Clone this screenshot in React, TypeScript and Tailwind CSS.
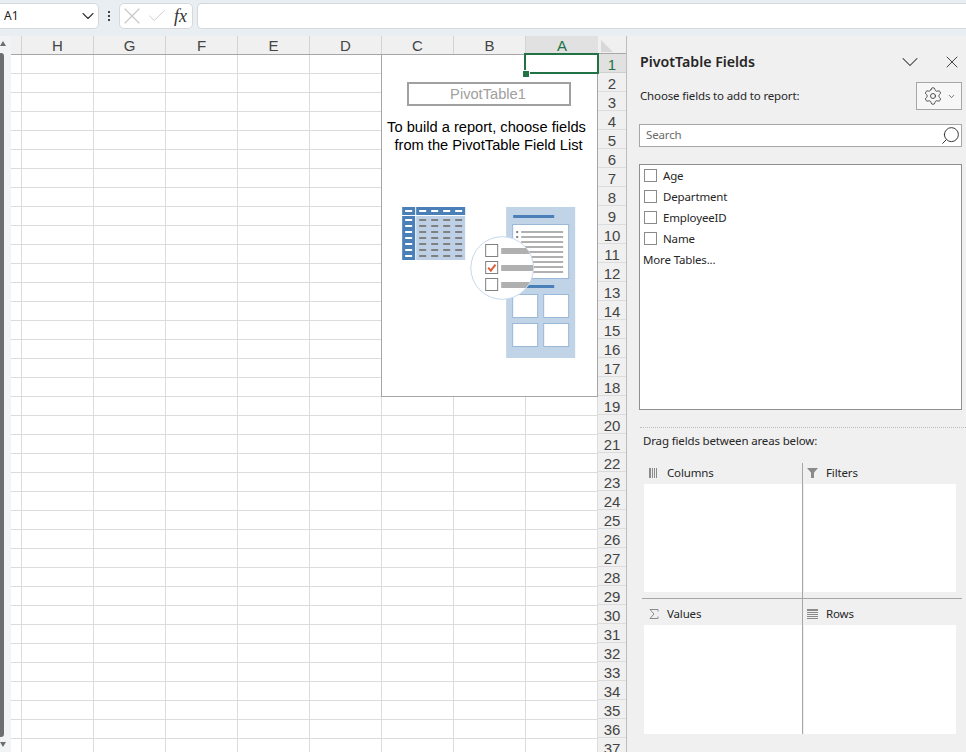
import { Check, ChevronDown, Search, Settings, X } from "lucide-react";

const columns = ["H", "G", "F", "E", "D", "C", "B", "A"];
const rowNumbers = Array.from({ length: 37 }, (_, i) => i + 1);
const fields = ["Age", "Department", "EmployeeID", "Name"];

function FormulaBar() {
  return (
    <div className="flex h-[36px] items-start bg-[#e9eef2] pt-[3px] font-['Noto_Sans',sans-serif]">
      <div className="ml-[-6px] flex h-[26px] w-[105px] items-center justify-between rounded-[5px] border border-[#d6d8da] bg-white pl-[9px] text-[12px] text-[#222]">
        <span>A1</span>
        <ChevronDown size={20} strokeWidth={1.3} className="text-[#333]" />
      </div>
      <div className="ml-[7px] flex h-[26px] w-[6px] flex-col items-center justify-center gap-[2px]">
        <span className="h-[2px] w-[2px] bg-[#444]" />
        <span className="h-[2px] w-[2px] bg-[#444]" />
        <span className="h-[2px] w-[2px] bg-[#444]" />
      </div>
      <div className="ml-[7px] flex h-[26px] w-[74px] items-center rounded-[5px] border border-[#d6d8da] bg-white text-[#c8c8c8]">
        <X size={28} strokeWidth={1} className="ml-[-2px] shrink-0" />
        <Check size={22} strokeWidth={1} className="shrink-0" />
        <span className="ml-[6px] font-['Liberation_Serif',serif] text-[18px] text-[#333] italic">fx</span>
      </div>
      <div className="ml-[4px] h-[26px] flex-1 rounded-l-[5px] border border-r-0 border-[#d6d8da] bg-white" />
    </div>
  );
}

function ScrollStrip() {
  return (
    <div className="flex h-[716px] w-[11px] flex-col bg-[#f1f3f5]">
      <div className="mt-[5px] h-[5px] w-0 border-x-[3px] border-b-[5px] border-x-transparent border-b-[#6e6e6e]" />
      <div className="mt-[7px] h-[684px] w-[4px] rounded-r-[3px] bg-[#6e6e6e]" />
      <div className="mt-[5px] h-0 w-0 border-x-[3px] border-t-[5px] border-x-transparent border-t-[#6e6e6e]" />
    </div>
  );
}

function Sheet() {
  return (
    <div className="relative w-[587px] font-['Liberation_Sans',sans-serif]">
      <div className="flex h-[19px] border-b border-[#a6a6a6] bg-[#f0f0f0] text-[15px] leading-[19px] text-[#444]">
        <div className="w-[11px] border-r border-[#d4d4d4]" />
        {columns.map((col) => (
          <div
            key={col}
            className={
              col === "A"
                ? "w-[72px] bg-[#e1e1e1] text-center text-[#217346]"
                : "w-[72px] border-r border-[#d4d4d4] text-center"
            }
          >
            {col}
          </div>
        ))}
      </div>
      <div className="h-[697px] overflow-hidden bg-white">
        {rowNumbers.map((n) => (
          <div key={n} className="flex h-[19px] border-b border-[#dcdcdc]">
            <div className="w-[11px] border-r border-[#dcdcdc]" />
            {columns.map((col) => (
              <div key={col} className="w-[72px] border-r border-[#dcdcdc]" />
            ))}
          </div>
        ))}
      </div>

      {/* PivotTable placeholder sits over the cells */}
      <div className="absolute top-[18px] left-[370px] flex h-[343px] w-[217px] flex-col items-center border border-[#a6a6a6] bg-white text-[14.67px] text-black">
        <div className="mt-[27px] mr-[1px] flex h-[24px] w-[164px] items-center justify-center border-2 border-[#a0a0a0] pr-[2px] text-[#a0a0a0]">
          PivotTable1
        </div>
        <p className="mt-[12px] mr-[6px] text-center leading-[18px] whitespace-pre">
          {"To build a report, choose fields\n from the PivotTable Field List"}
        </p>
        <PivotArt />
      </div>

      {/* Active cell */}
      <div className="absolute top-[17px] left-[513px] h-[21px] w-[75px] border-2 border-[#217346]" />
      <div className="absolute top-[35px] left-[512px] h-[6px] w-[6px] bg-[#217346] outline outline-white" />
    </div>
  );
}

function PivotArt() {
  const headerX = [117, 153, 189, 225];
  const rowY = [87, 105, 123, 141, 159, 177, 195];
  const lineY = [123, 138, 153, 168, 183, 198, 213, 228, 243];
  const boxes = [
    [396, 312],
    [489, 312],
    [396, 399],
    [489, 399],
  ];
  return (
    <svg viewBox="60 45 530 465" className="mt-[51px] mr-[2px] h-[155px] w-[177px] shrink-0">
      <defs>
        <clipPath id="lens">
          <circle cx="366" cy="234" r="93" />
        </clipPath>
      </defs>
      <rect x="66" y="51" width="39" height="24" fill="#4a7fb8" />
      <rect x="108" y="51" width="147" height="24" fill="#4a7fb8" />
      <rect x="66" y="78" width="39" height="132" fill="#4a7fb8" />
      <rect x="108" y="78" width="147" height="132" fill="#bdd0e6" />
      <rect x="75" y="60" width="21" height="6" fill="#fff" />
      {headerX.map((x) => (
        <rect key={x} x={x} y="60" width="21" height="6" fill="#fff" />
      ))}
      {rowY.map((y) => (
        <g key={y}>
          <rect x="75" y={y} width="21" height="6" fill="#fff" />
          {headerX.map((x) => (
            <rect key={x} x={x} y={y} width="21" height="6" fill="#808080" />
          ))}
        </g>
      ))}

      <rect x="378" y="51" width="207" height="453" fill="#c0d3e7" />
      <rect x="399" y="75" width="123" height="9" fill="#4a7fb8" />
      <rect x="397.5" y="103.5" width="168" height="162" fill="#fff" stroke="#9ab8d8" strokeWidth="3" />
      {lineY.map((y) => (
        <rect key={y} x="423" y={y} width="126" height="6" fill="#b0b0b0" />
      ))}
      <rect x="408" y="123" width="6" height="6" fill="#808080" />
      <rect x="408" y="138" width="6" height="6" fill="#808080" />
      <rect x="399" y="285" width="123" height="9" fill="#4a7fb8" />
      {boxes.map(([x, y]) => (
        <rect key={`${x}-${y}`} x={x + 1.5} y={y + 1.5} width="75" height="69" fill="#fff" stroke="#9ab8d8" strokeWidth="3" />
      ))}

      <circle cx="366" cy="234" r="94" fill="#fff" stroke="#c8d8ea" strokeWidth="3" />
      <g clipPath="url(#lens)">
        <rect x="363" y="174" width="110" height="18" fill="#b0b0b0" />
        <rect x="363" y="225" width="110" height="18" fill="#b0b0b0" />
        <rect x="363" y="276" width="110" height="18" fill="#b0b0b0" />
      </g>
      <rect x="316.5" y="163.5" width="36" height="36" fill="#fff" stroke="#808080" strokeWidth="3" />
      <rect x="316.5" y="214.5" width="36" height="36" fill="#fff" stroke="#808080" strokeWidth="3" />
      <rect x="316.5" y="265.5" width="36" height="36" fill="#fff" stroke="#808080" strokeWidth="3" />
      <path d="M324 233 L332 242 L346 224" fill="none" stroke="#d9603f" strokeWidth="6" />
    </svg>
  );
}

function RowHeaders() {
  return (
    <div className="h-[716px] w-[28px] overflow-hidden bg-[#f0f0f0] font-['Liberation_Sans',sans-serif]">
      <div className="h-[18px] border-b border-[#a6a6a6] pt-[4px] pl-[3px]">
        <div className="h-0 w-0 border-t-[12px] border-l-[12px] border-t-transparent border-l-[#d8d8d8]" />
      </div>
      {rowNumbers.map((n) => (
        <div
          key={n}
          className={
            n === 1
              ? "h-[19px] border-b border-[#cfcfcf] bg-[#e1e1e1] text-center text-[15px] leading-[21px] text-[#217346]"
              : "h-[19px] border-b border-[#dcdcdc] text-center text-[15px] leading-[21px] text-[#444]"
          }
        >
          {n}
        </div>
      ))}
    </div>
  );
}

function ColumnsIcon() {
  return (
    <svg width="10" height="10" viewBox="0 0 10 10" className="shrink-0">
      <rect x="0" width="2" height="10" fill="#8a8a8a" />
      <rect x="3" width="1" height="10" fill="#8a8a8a" />
      <rect x="5" width="1" height="10" fill="#8a8a8a" />
      <rect x="7" width="1" height="10" fill="#8a8a8a" />
    </svg>
  );
}

function FilterIcon() {
  return (
    <svg width="11" height="10" viewBox="0 0 11 10" className="shrink-0">
      <path d="M0 0 H11 L7 4.5 V10 H4 V4.5 Z" fill="#8a8a8a" />
    </svg>
  );
}

function SigmaIcon() {
  return (
    <svg width="10" height="10" viewBox="0 0 10 10" className="shrink-0">
      <path d="M9 2.5 V0.5 H1 L5 5 L1 9.5 H9 V7.5" fill="none" stroke="#8a8a8a" strokeWidth="1" />
    </svg>
  );
}

function RowsIcon() {
  return (
    <svg width="11" height="10" viewBox="0 0 11 10" className="shrink-0">
      <rect y="0" width="11" height="2" fill="#8a8a8a" />
      <rect y="3" width="11" height="1" fill="#8a8a8a" />
      <rect y="5" width="11" height="1" fill="#8a8a8a" />
      <rect y="7" width="11" height="1" fill="#8a8a8a" />
      <rect y="9" width="11" height="1" fill="#8a8a8a" />
    </svg>
  );
}

function AreaLabel({ icon, label, inset }: { icon: React.ReactNode; label: string; inset: string }) {
  return (
    <div className={`flex h-full items-center gap-[8px] ${inset}`}>
      {icon}
      <span>{label}</span>
    </div>
  );
}

function FieldsPanel() {
  return (
    <div className="h-[716px] w-[340px] overflow-hidden border-l border-[#bdbdbd] bg-[#f0f0f0] font-['Noto_Sans',sans-serif] text-[11.5px] tracking-[-0.15px] text-[#262626]">
      <div className="flex h-[46px] items-center pt-[6px] pr-[4px] pl-[13px]">
        <span className="text-[14.2px] font-semibold tracking-normal">PivotTable Fields</span>
        <ChevronDown size={28} strokeWidth={0.9} className="ml-auto text-[#333]" />
        <X size={20} strokeWidth={1.1} className="ml-[18px] text-[#333]" />
      </div>

      <div className="flex h-[28px] items-center pr-[4px] pl-[13px]">
        <span>Choose fields to add to report:</span>
        <div className="ml-auto flex h-[28px] w-[46px] items-center justify-center gap-[4px] border border-[#a6a6a6] bg-[#f7f7f7]">
          <Settings size={20} strokeWidth={1} className="text-[#333]" />
          <ChevronDown size={9} strokeWidth={1.8} className="text-[#333]" />
        </div>
      </div>

      <div className="mt-[14px] mr-[4px] ml-[12px] flex h-[23px] items-center justify-between border border-[#a6a6a6] bg-white pl-[6px] text-[#6a6a6a]">
        <span className="pb-[2px]">Search</span>
        <Search size={21} strokeWidth={1.1} className="-scale-x-100 text-[#333]" />
      </div>

      <div className="mt-[17px] mr-[4px] ml-[12px] h-[246px] border border-[#8f8f8f] bg-white">
        {fields.map((field) => (
          <div key={field} className="flex h-[21px] items-center pl-[4px]">
            <span className="h-[13px] w-[13px] border border-[#8a8a8a]" />
            <span className="ml-[6px]">{field}</span>
          </div>
        ))}
        <div className="flex h-[22px] items-center pl-[3px]">More Tables...</div>
      </div>

      <div className="mt-[17px] ml-[13px] border-t border-dotted border-[#bdbdbd]" />
      <div className="mt-[4px] ml-[16px] h-[18px] leading-[18px]">Drag fields between areas below:</div>

      <div className="mt-[13px] ml-[15px] w-[320px]">
        <div className="flex border-b border-[#a6a6a6]">
          <div className="h-[135px] w-[161px] border-r border-[#a6a6a6]">
            <div className="h-[21px] pb-[2px]">
              <AreaLabel icon={<ColumnsIcon />} label="Columns" inset="pl-[7px]" />
            </div>
            <div className="ml-[2px] h-[108px] bg-white" />
          </div>
          <div className="w-[159px]">
            <div className="h-[21px] pb-[2px]">
              <AreaLabel icon={<FilterIcon />} label="Filters" inset="pl-[4px]" />
            </div>
            <div className="ml-[1px] h-[108px] w-[152px] bg-white" />
          </div>
        </div>
        <div className="flex">
          <div className="h-[135px] w-[161px] border-r border-[#a6a6a6]">
            <div className="h-[26px] pt-[3px]">
              <AreaLabel icon={<SigmaIcon />} label="Values" inset="pl-[7px]" />
            </div>
            <div className="ml-[2px] h-[109px] bg-white" />
          </div>
          <div className="w-[159px]">
            <div className="h-[26px] pt-[3px]">
              <AreaLabel icon={<RowsIcon />} label="Rows" inset="pl-[4px]" />
            </div>
            <div className="ml-[1px] h-[109px] w-[152px] bg-white" />
          </div>
        </div>
      </div>
    </div>
  );
}

export default function App() {
  return (
    <div className="h-[752px] w-[966px] overflow-hidden bg-[#f0f0f0]">
      <FormulaBar />
      <div className="flex">
        <ScrollStrip />
        <Sheet />
        <RowHeaders />
        <FieldsPanel />
      </div>
    </div>
  );
}
